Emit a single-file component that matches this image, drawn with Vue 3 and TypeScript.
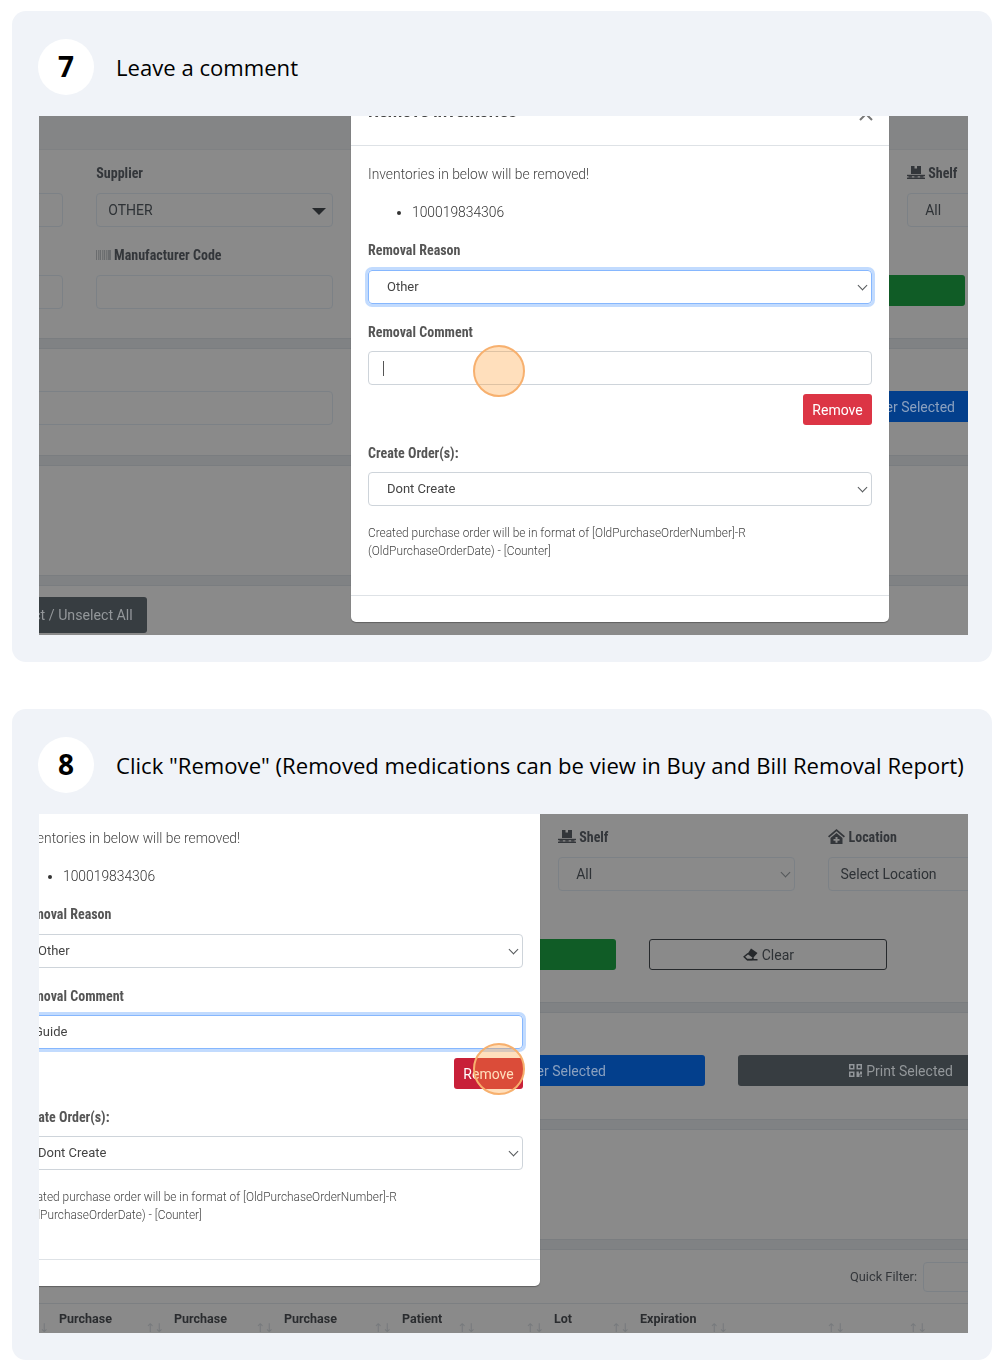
<template>
  <div class="guide">
    <section v-for="step in steps" :key="step.num" class="card">
      <header class="card-head">
        <span class="num">{{ step.num }}</span>
        <h2>{{ step.title }}</h2>
      </header>

      <div class="shot">
        <div class="page" :style="pageStyle(step)">
          <div class="topbar"></div>

          <div class="panel panel-filters">
            <div class="filter-row">
              <div class="field">
                <label class="lbl"></label>
                <div class="ctl"></div>
              </div>
              <div class="field">
                <label class="lbl">Supplier</label>
                <div class="ctl ctl-supplier">OTHER<i class="caret"></i></div>
              </div>
              <div></div>
              <div></div>
              <div class="field">
                <label class="lbl lbl-icon">
                  <svg width="18" height="14" viewBox="0 0 18 14" fill="#33363a">
                    <path d="M3 0h3.500v2.500h2.500V0H13v8H3z" transform="translate(1 0)" />
                    <rect x="0" y="8.800" width="18" height="1.400" />
                    <rect x="1.500" y="10.200" width="3.400" height="1.400" />
                    <rect x="7.300" y="10.200" width="3.400" height="1.400" />
                    <rect x="13.100" y="10.200" width="3.400" height="1.400" />
                    <rect x="0" y="11.600" width="18" height="1.400" />
                  </svg>
                  Shelf
                </label>
                <div class="ctl ctl-pad ctl-chev">All</div>
              </div>
              <div class="field">
                <label class="lbl">
                  <svg width="17" height="15" viewBox="0 0 17 15" fill="#33363a">
                    <path d="M8.500 0L17 7.200l-1.200 1.300-7.300-6.200-7.300 6.200L0 7.200z" />
                    <path
                      d="M8.500 4L14.500 9v6h-12V9zM7.500 8v2H5.500v1.800h2v2h2v-2h2V10h-2V8z"
                      fill-rule="evenodd"
                    />
                  </svg>
                  Location
                </label>
                <div class="ctl">Select Location</div>
              </div>
            </div>

            <div class="filter-row-2">
              <div class="field">
                <label class="lbl"></label>
                <div class="ctl"></div>
              </div>
              <div class="field">
                <label class="lbl">
                  <svg width="15" height="10" viewBox="0 0 15 10" fill="#6a6c6e">
                    <path d="M0 0h1v10H0zM2 0h.8v10H2zM3.600 0h1.400v10H3.600zM6 0h.8v10H6zM7.600 0h1.600v10H7.600zM10 0h.8v10H10zM11.600 0H15v10h-3.400z" />
                  </svg>
                  Manufacturer Code
                </label>
                <div class="ctl"></div>
              </div>
              <div></div>
              <button class="btn btn-green" type="button"></button>
              <button class="btn btn-clear" type="button">
                <svg width="15" height="13" viewBox="0 0 15 13">
                  <path d="M8 .5L14.500 5 10 10 4.500 6z" fill="#26292c" />
                  <path d="M5 5.500L1.200 8.700 4 11.500h5L10.500 9.500" fill="none" stroke="#26292c" stroke-width="1.500" />
                  <rect x="4" y="11" width="10.500" height="1.500" fill="#26292c" />
                </svg>
                Clear
              </button>
            </div>
          </div>

          <div class="band"></div>

          <div class="panel panel-actions">
            <div class="ctl ctl-wide"></div>
            <button class="btn btn-blue" type="button">Transfer Selected</button>
            <button class="btn btn-dark btn-print" type="button">
              <svg width="13" height="13" viewBox="0 0 13 13" fill="#92969a">
                <path
                  d="M0 0h5.500v5.500H0zm1.500 1.500V4H4V1.500zM7.500 0H13v5.500H7.500zM9 1.500V4h2.500V1.500zM0 7.500h5.500V13H0zM1.500 9v2.500H4V9zM7.500 7.500h2.300V9.500H11V7.500h2v3h-2.500V13h-3zM11.500 11.500H13V13h-1.500z"
                  fill-rule="evenodd"
                />
              </svg>
              Print Selected
            </button>
          </div>

          <div class="band"></div>
          <div class="panel panel-empty"></div>
          <div class="band"></div>

          <div class="panel panel-table-top">
            <button class="btn btn-dark btn-select" type="button">Select / Unselect All</button>
            <span class="quick">Quick Filter:</span>
            <div class="ctl ctl-quick"></div>
          </div>

          <div class="thead">
            <div v-for="(col, i) in columns" :key="i" class="th" :style="{ width: col.width + 'px' }">
              <span class="th-name">{{ col.name }}</span>
              <span class="th-sort">↑↓</span>
            </div>
          </div>

          <div class="modal">
            <div class="modal-head">
              <h5>Remove Inventories</h5>
              <svg class="close" width="14" height="14" viewBox="0 0 14 14">
                <path d="M1 1l12 12M13 1L1 13" />
              </svg>
            </div>

            <div class="modal-body">
              <p class="lead">Inventories in below will be removed!</p>
              <ul>
                <li>100019834306</li>
              </ul>

              <label class="mlbl mlbl-first">Removal Reason</label>
              <div class="mctl mctl-chev" :class="{ focus: step.focus === 'reason' }">Other</div>

              <label class="mlbl">Removal Comment</label>
              <div class="mctl mctl-comment" :class="{ focus: step.focus === 'comment' }">
                <span v-if="step.comment">{{ step.comment }}</span>
                <i v-else class="text-caret"></i>
              </div>

              <div class="remove-row">
                <button class="btn-remove" :class="{ pressed: step.pressed }" type="button">Remove</button>
              </div>

              <label class="mlbl">Create Order(s):</label>
              <div class="mctl mctl-chev">Dont Create</div>

              <p class="hint">
                Created purchase order will be in format of [OldPurchaseOrderNumber]-R<br />
                (OldPurchaseOrderDate) - [Counter]
              </p>
            </div>

            <div class="modal-foot"></div>
          </div>
        </div>

        <span class="click"></span>
      </div>
    </section>
  </div>
</template>

<script setup lang="ts">
interface Step {
  num: number;
  title: string;
  viewX: number;
  viewY: number;
  focus: "reason" | "comment";
  comment: string;
  pressed: boolean;
}

const steps: Step[] = [
  {
    num: 7,
    title: "Leave a comment",
    viewX: 0,
    viewY: 0,
    focus: "reason",
    comment: "",
    pressed: false,
  },
  {
    num: 8,
    title: 'Click "Remove" (Removed medications can be view in Buy and Bill Removal Report)',
    viewX: 349,
    viewY: 34,
    focus: "comment",
    comment: "Guide",
    pressed: true,
  },
];

const columns = [
  { name: "", width: 100 },
  { name: "Purchase", width: 115 },
  { name: "Purchase", width: 110 },
  { name: "Purchase", width: 118 },
  { name: "Patient", width: 84 },
  { name: "", width: 68 },
  { name: "Lot", width: 86 },
  { name: "Expiration", width: 98 },
  { name: "", width: 117 },
  { name: "", width: 82 },
];

// the page starts 233px left of the first crop
function pageStyle(step: Step) {
  return { transform: `translate(${-233 - step.viewX}px, ${-step.viewY}px)` };
}
</script>

<style>
body {
  background: #fff;
}
</style>

<style scoped>
.guide {
  display: flex;
  flex-direction: column;
  gap: 47px;
  padding: 11px 10px 9px 12px;
  font-family: Roboto, "Liberation Sans", sans-serif;
}

.card {
  background: #f0f3f8;
  border-radius: 14px;
  padding: 28px 24px 27px 27px;
  height: 651px;
  box-sizing: border-box;
}

.card-head {
  display: flex;
  align-items: center;
  gap: 22px;
  height: 56px;
  margin: 0 0 21px -1px;
}

.num {
  width: 56px;
  height: 56px;
  border-radius: 50%;
  background: #fff;
  color: #000;
  display: flex;
  align-items: center;
  justify-content: center;
  font: 700 28px "Open Sans", sans-serif;
  padding-bottom: 2px;
  box-sizing: border-box;
}

.card-head h2 {
  margin: 0;
  font: 400 22.1px "Open Sans", sans-serif;
  color: #000;
  white-space: nowrap;
}

.shot {
  position: relative;
  height: 519px;
  overflow: hidden;
  background: #8a8a8a;
}

.page {
  position: absolute;
  left: 0;
  top: 0;
  width: 1700px;
  font-size: 14px;
  color: #2e3236;
  filter: blur(0.35px);
}

.topbar {
  height: 34px;
  background: #848586;
  border-bottom: 1px solid #7f8183;
  box-sizing: border-box;
}

.panel {
  padding-left: 20px;
  box-sizing: border-box;
}

.panel-filters {
  height: 188px;
  padding-top: 12px;
}

.filter-row {
  display: grid;
  grid-template-columns: repeat(6, 237px);
  column-gap: 33.3px;
}

.filter-row-2 {
  display: grid;
  grid-template-columns: 237px 237px 328px 238px 238px;
  column-gap: 33.1px;
  margin-top: 17px;
}

.lbl,
.mlbl {
  display: flex;
  align-items: center;
  gap: 3px;
  height: 21px;
  font-family: "Liberation Sans Narrow", "Roboto Condensed", Roboto, sans-serif;
  font-weight: 700;
  font-size: 14px;
}

.lbl {
  color: #33363a;
  margin-bottom: 10px;
}

.ctl {
  height: 34px;
  border: 1px solid #7c8186;
  border-radius: 4px;
  box-sizing: border-box;
  padding: 0 11px;
  display: flex;
  align-items: center;
  position: relative;
}

.ctl-pad {
  padding-left: 17px;
}

.ctl-chev::after,
.mctl-chev::after {
  content: "";
  position: absolute;
  right: 5px;
  top: 50%;
  width: 6px;
  height: 6px;
  margin-top: -5px;
  border-right: 1px solid #55585b;
  border-bottom: 1px solid #55585b;
  transform: rotate(45deg);
}

.caret {
  position: absolute;
  right: 6px;
  top: 14px;
  border-left: 7px solid transparent;
  border-right: 7px solid transparent;
  border-top: 7px solid #26292c;
}

.btn {
  height: 31px;
  border: 0;
  border-radius: 3px;
  font: 400 14px Roboto, sans-serif;
  display: flex;
  align-items: center;
  justify-content: center;
  gap: 4px;
  padding: 0;
  flex: none;
}

.btn-green {
  background: #105c26;
  margin-top: 31px;
}

.btn-clear {
  background: transparent;
  border: 1px solid #26292c;
  color: #2e3236;
  margin-top: 31px;
}

.band {
  height: 11px;
  background: #808284;
  border-top: 1px solid #7a7d80;
  border-bottom: 1px solid #7a7d80;
  box-sizing: border-box;
}

.panel-actions {
  height: 106px;
  padding-top: 42px;
  display: flex;
  align-items: flex-start;
}

.ctl-wide {
  flex: none;
  width: 507px;
}

.btn-blue {
  width: 326px;
  margin-left: 395px;
  padding-left: 19px;
  background: #033f8c;
  color: #8aa0bf;
}

.btn-dark {
  background: #373d41;
  color: #93979a;
}

.btn-print {
  width: 326px;
  margin-left: 33px;
}

.panel-empty {
  height: 109px;
}

.panel-table-top {
  height: 54px;
  display: flex;
  align-items: flex-start;
  padding-top: 11px;
  padding-left: 0;
  border-bottom: 1px solid #7c7f82;
}

.btn-select {
  width: 158px;
  height: 36px;
  margin-left: 183px;
  padding-left: 3px;
  font-size: 14.2px;
}

.quick {
  margin-left: 1052px;
  margin-top: 8px;
  font-family: "Liberation Sans Narrow", Roboto, sans-serif;
  font-size: 12.8px;
  color: #33363a;
  white-space: nowrap;
}

.ctl-quick {
  flex: none;
  width: 200px;
  height: 30px;
  margin-left: 6px;
  margin-top: 1px;
}

.thead {
  display: flex;
  height: 30px;
  margin-left: 494px;
}

.th {
  flex: none;
  display: flex;
  justify-content: space-between;
  box-sizing: border-box;
  padding: 7px 3px 0 8px;
}

.th-name {
  font-family: "Liberation Sans Narrow", Roboto, sans-serif;
  font-weight: 700;
  font-size: 12.5px;
  line-height: 16px;
  color: #2a2c2f;
}

.th-sort {
  margin-left: auto;
  align-self: flex-end;
  font: 12px/12px "DejaVu Sans", sans-serif;
  letter-spacing: -1px;
  color: #777a7d;
}

.modal {
  position: absolute;
  left: 545px;
  top: -30px;
  width: 538px;
  height: 536px;
  background: #fff;
  border-radius: 0 0 5px 5px;
  box-shadow: 0 1px 1px rgba(0, 0, 0, 0.3);
  display: flex;
  flex-direction: column;
  color: #555;
}

.modal-head {
  height: 60px;
  flex: none;
  box-sizing: border-box;
  border-bottom: 1px solid #dee2e6;
  padding: 0 17px 24px;
  display: flex;
  align-items: flex-end;
  justify-content: space-between;
}

.modal-head h5 {
  margin: 0;
  font-size: 16.7px;
  line-height: 18px;
  font-weight: 700;
  color: #444;
}

.close {
  margin-right: -1px;
}

.close path {
  stroke: #777;
  stroke-width: 2;
  fill: none;
}

.modal-body {
  flex: 1;
  padding: 18px 17px 0;
  font-size: 13.85px;
}

.lead {
  margin: 0 0 17px;
  line-height: 21px;
  font-weight: 300;
  color: #444;
}

ul {
  margin: 0 0 16px;
  padding-left: 44px;
  line-height: 21px;
  font-weight: 300;
  color: #333;
}

.mlbl {
  color: #555;
  margin-bottom: 9px;
}

.mlbl-first {
  margin-bottom: 10px;
}

.mctl {
  height: 34px;
  border: 1px solid #ced4da;
  border-radius: 4px;
  box-sizing: border-box;
  padding: 0 18px 2px;
  display: flex;
  align-items: center;
  position: relative;
  margin-bottom: 17px;
  color: #444;
  font-size: 13px;
}

.mctl.focus {
  border-color: #86b7fe;
  box-shadow: 0 0 0 3px rgba(13, 110, 253, 0.25);
}

.mctl-comment {
  margin-bottom: 9px;
  padding-left: 14px;
}

.text-caret {
  width: 1px;
  height: 15px;
  margin-top: 2px;
  background: #555;
}

.remove-row {
  display: flex;
  justify-content: flex-end;
  margin-bottom: 17px;
}

.btn-remove {
  width: 69px;
  height: 31px;
  border: 0;
  border-radius: 3px;
  background: #dc3545;
  color: #fff;
  font: 400 14px Roboto, sans-serif;
  padding: 0;
}

.btn-remove.pressed {
  background: #c82039;
}

.hint {
  margin: 18px 0 0;
  font-size: 11.88px;
  line-height: 18px;
  font-weight: 300;
  color: #444;
}

.modal-foot {
  flex: none;
  height: 27px;
  border-top: 1px solid #dee2e6;
  box-sizing: border-box;
}

.click {
  position: absolute;
  left: 434px;
  top: 229px;
  width: 52px;
  height: 52px;
  box-sizing: border-box;
  border-radius: 50%;
  background: rgba(255, 160, 60, 0.34);
  border: 2px solid #f7b06e;
}
</style>
